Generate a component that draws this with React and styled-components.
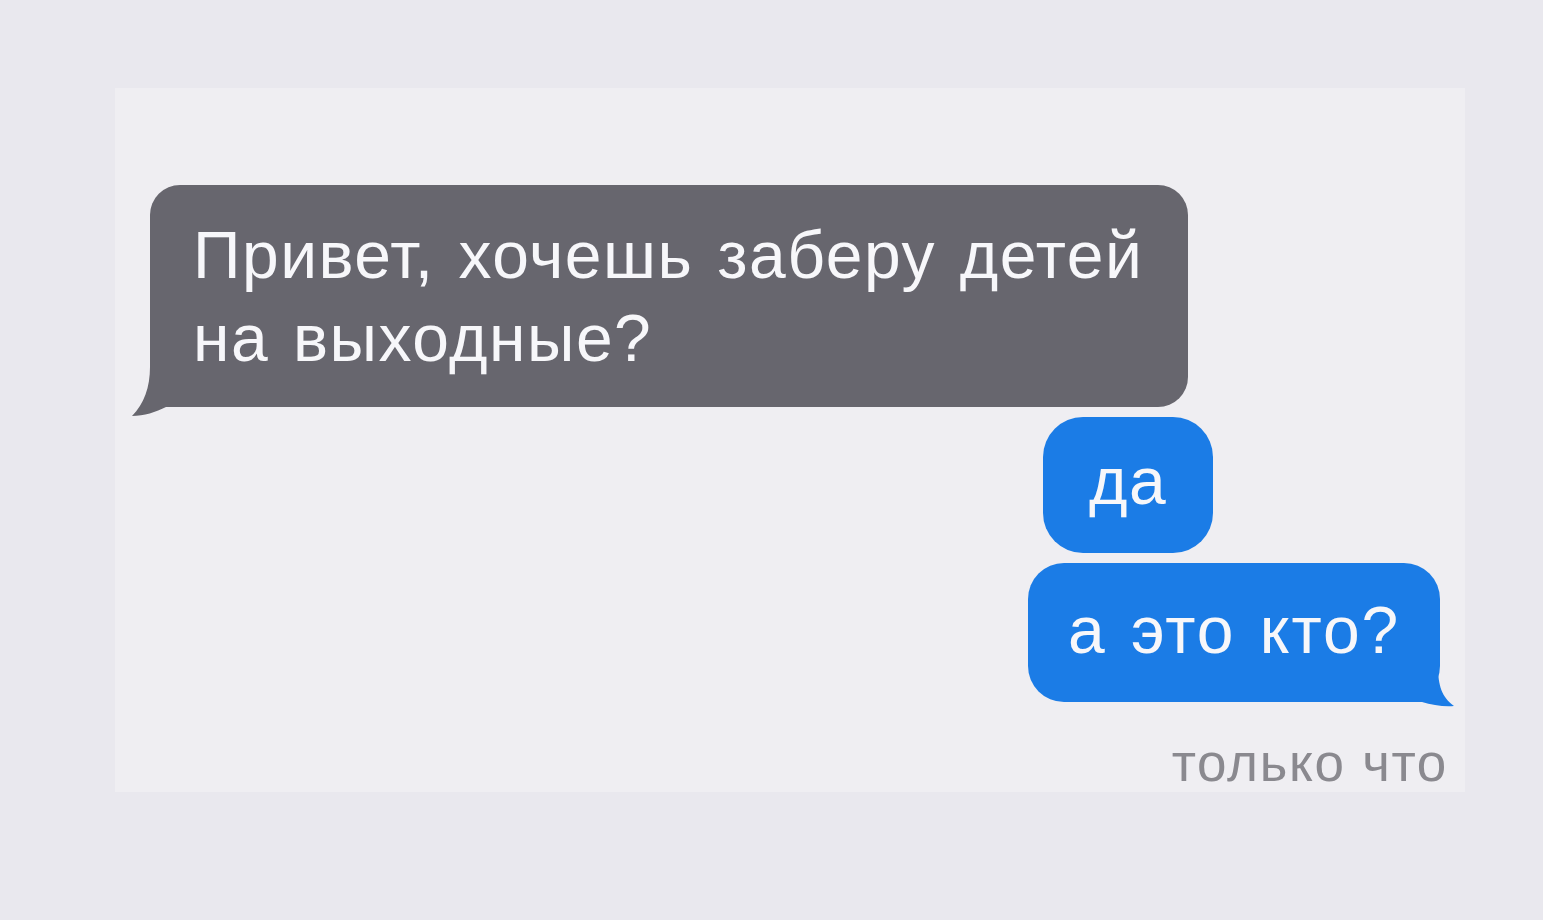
import React from "react";
import styled, { createGlobalStyle } from "styled-components";

const Global = createGlobalStyle`
  html, body {
    margin: 0;
    padding: 0;
    background: #e9e8ee;
  }
  body {
    font-family: "Liberation Sans", Arial, sans-serif;
    -webkit-font-smoothing: antialiased;
  }
`;

const Page = styled.div`
  width: 1543px;
  height: 920px;
  padding-top: 88px;
  padding-left: 115px;
  box-sizing: border-box;
  background: #e9e8ee;
`;

const Thread = styled.div`
  width: 1350px;
  height: 704px;
  background: #efeef2;
  display: flex;
  flex-direction: column;
  align-items: flex-start;
  padding-top: 97px;
  box-sizing: border-box;
`;

const Bubble = styled.div`
  position: relative;
  flex: none;
  box-sizing: border-box;
  width: ${(p) => p.$w}px;
  height: ${(p) => p.$h}px;
  margin-left: ${(p) => p.$x}px;
  margin-top: ${(p) => p.$gap || 0}px;
  padding: ${(p) => p.$pad};
  border-radius: ${(p) => p.$r}px;
  background: ${(p) => (p.$out ? "#1b7ce6" : "#67666e")};
  color: #f7f7fa;
  font-size: ${(p) => p.$fs}px;
  line-height: ${(p) => p.$lh}px;
  letter-spacing: ${(p) => p.$ls || 0}px;
  word-spacing: ${(p) => p.$ws || 0}px;
  display: flex;
  flex-direction: column;
  justify-content: ${(p) => (p.$center ? "center" : "flex-start")};
  align-items: ${(p) => (p.$center ? "center" : "flex-start")};
  white-space: nowrap;
`;

/* tail shapes: the straight part of each path ends exactly on the bubble's bottom edge */
const Tail = styled.svg`
  position: absolute;
  overflow: visible;
  ${(p) =>
    p.$side === "left"
      ? "left: -20px; bottom: -9px;"
      : "right: -14px; bottom: -4px;"}
`;

const Stamp = styled.div`
  flex: none;
  align-self: flex-end;
  margin-right: 17px;
  margin-top: 31px;
  font-size: 53px;
  line-height: 60px;
  color: #8a898f;
  letter-spacing: 1.7px;
`;

export default function App() {
  return (
    <>
      <Global />
      <Page>
        <Thread>
          <Bubble $x={35} $w={1038} $h={222} $r={30} $fs={66} $lh={83} $ls={1.5} $ws={4} $pad="29px 40px 20px 43px">
            <span>Привет, хочешь заберу детей</span>
            <span>на выходные?</span>
            <Tail $side="left" width="60" height="49" viewBox="0 0 60 49">
              <path d="M20 0 C20 20 14 37 2 49 C14 49 26 45 36 40 L60 40 L60 0 Z" fill="#67666e" />
            </Tail>
          </Bubble>
          <Bubble $out $center $x={928} $gap={10} $w={170} $h={136} $r={40} $fs={66} $lh={70} $ls={1.5} $pad="0 0 8px 0">
            да
          </Bubble>
          <Bubble $out $x={913} $gap={10} $w={412} $h={139} $r={36} $fs={66} $lh={70} $ls={2} $ws={4} $pad="32px 20px 0 40px">
            а это кто?
            <Tail $side="right" width="50" height="40" viewBox="0 0 50 40">
              <path d="M34 0 C34 20 38 31 50 40 C40 41 28 39 18 36 L0 36 L0 0 Z" fill="#1b7ce6" />
            </Tail>
          </Bubble>
          <Stamp>только что</Stamp>
        </Thread>
      </Page>
    </>
  );
}
